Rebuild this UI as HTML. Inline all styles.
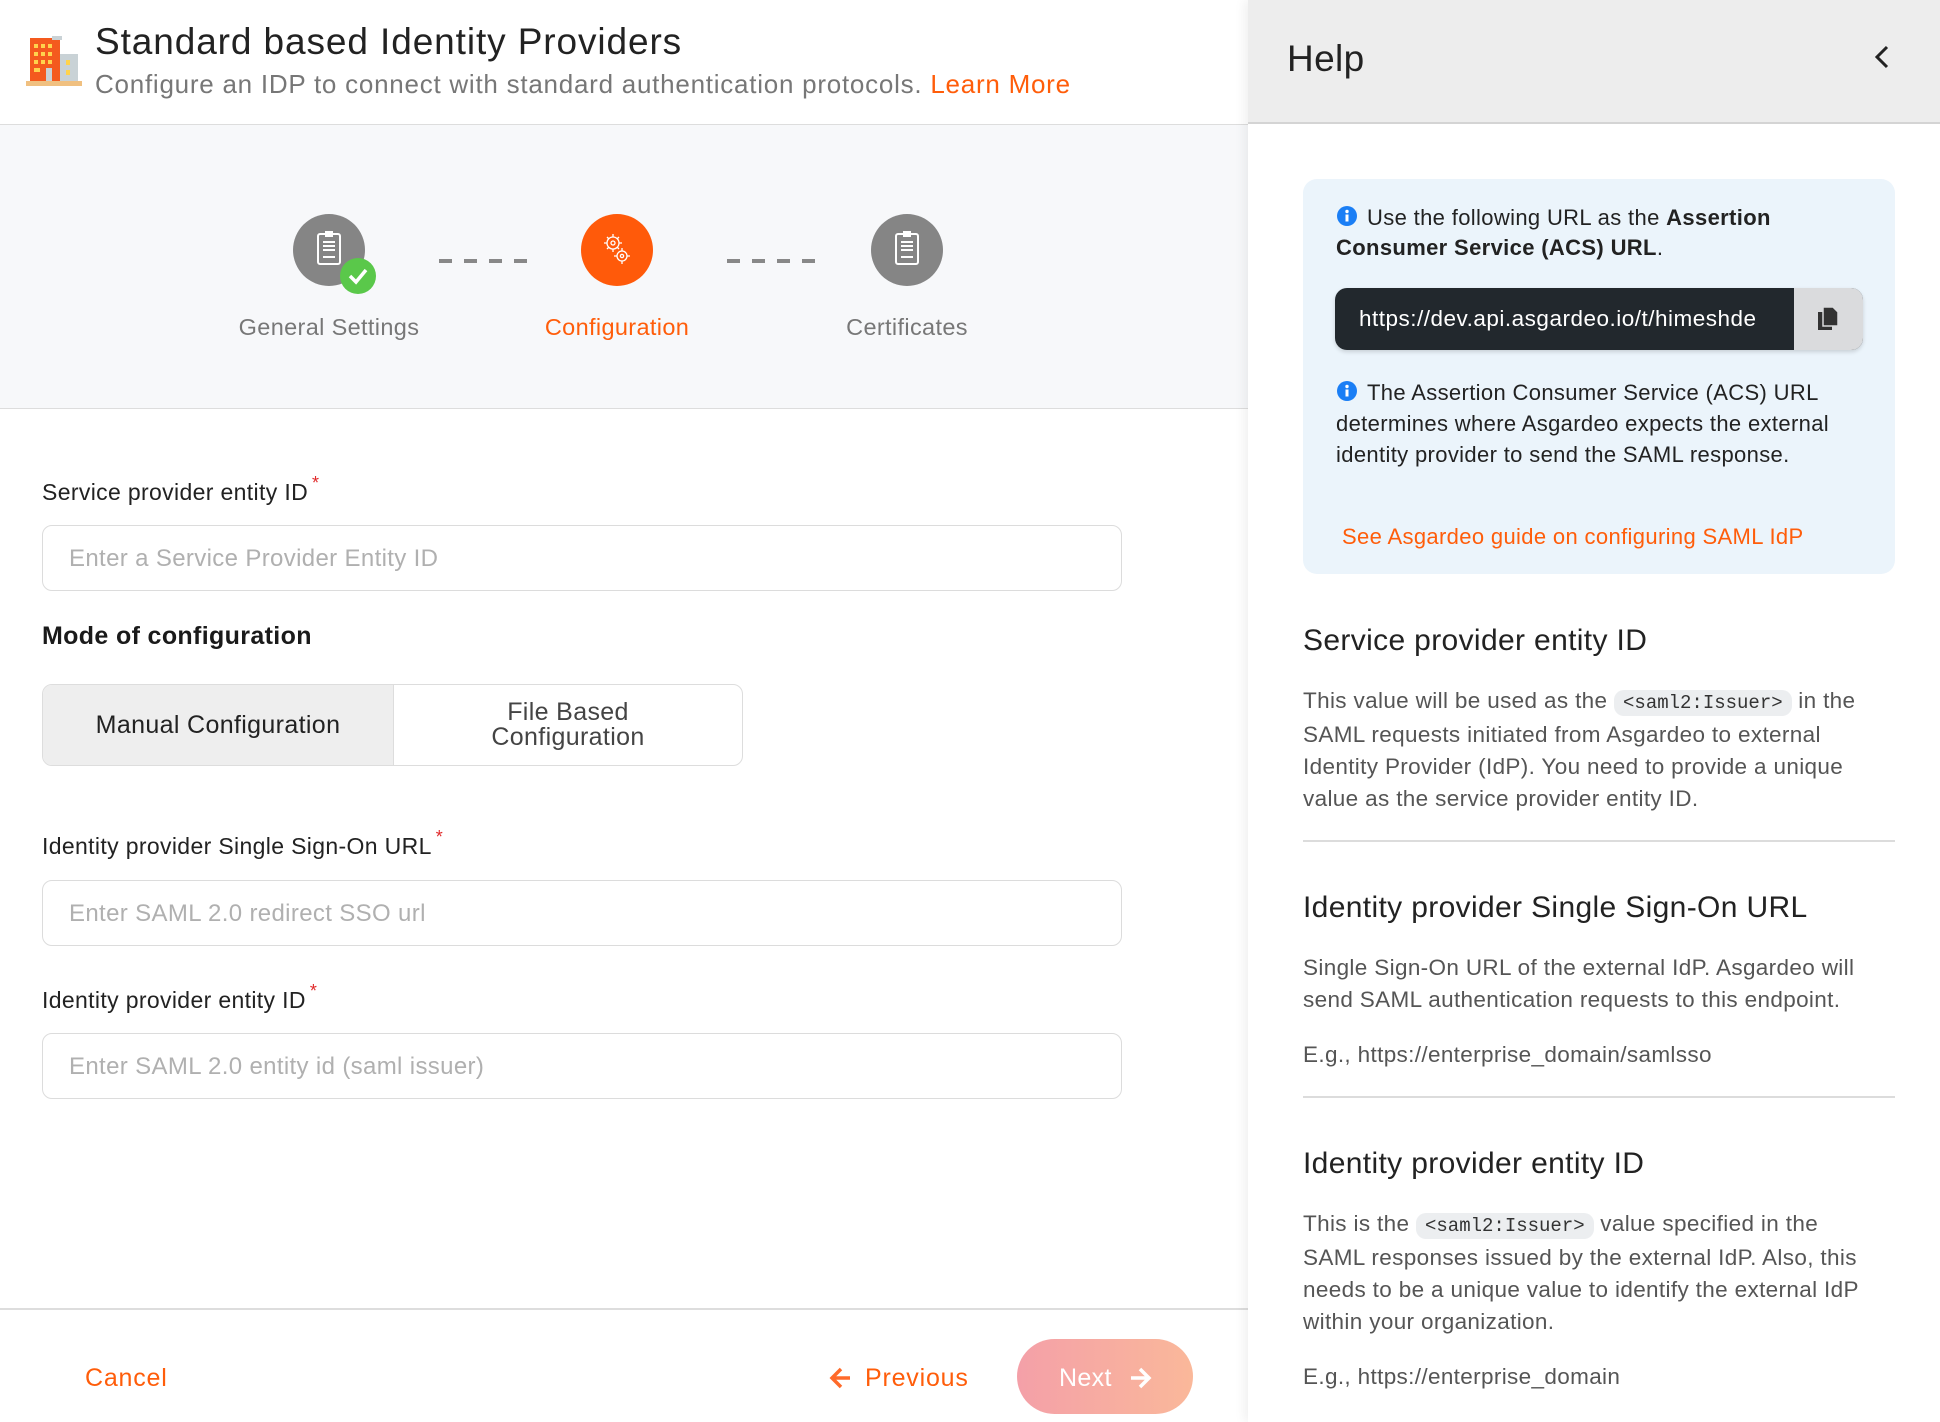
<!DOCTYPE html>
<html><head><meta charset="utf-8"><style>
*{box-sizing:border-box;margin:0;padding:0}
body{width:1940px;height:1422px;overflow:hidden;background:#fff;font-family:"Liberation Sans",sans-serif;position:relative;color:#222;letter-spacing:0.35px}
.a{position:absolute;white-space:nowrap}
.inp{position:absolute;left:42px;width:1080px;height:66px;border:1.5px solid #dcdcdc;border-radius:10px;font-size:24px;color:#b0b0b0;padding-left:26px;line-height:66px}
.lbl{font-size:23px;color:#222}
.req{color:#e0292a;font-size:18px;vertical-align:top;position:relative;top:-6px;margin-left:4px}
.circ{position:absolute;width:72px;height:72px;border-radius:50%;top:214px}
.dash{position:absolute;top:259px;height:4px;width:88px;background:repeating-linear-gradient(90deg,#888 0 13px,transparent 13px 25px)}
.ht{font-size:30px;color:#222}
.hp{font-size:22.5px;color:#555;line-height:32px}
code{font-family:"Liberation Mono",monospace;font-size:19px;background:#eceef0;border-radius:10px;padding:2px 9px;color:#333;letter-spacing:0}
.hr{position:absolute;left:1303px;width:592px;height:1.5px;background:#dcdcdc}
</style></head><body>
<svg class="a" style="left:26px;top:34px" width="56" height="54" viewBox="0 0 56 54">
<rect x="4" y="4" width="30" height="44" fill="#f45a1e"/><rect x="26" y="2" width="10" height="4" fill="#c9d2d6"/>
<rect x="34" y="20" width="18" height="28" fill="#c9d2d6"/>
<g fill="#ffd34d"><rect x="8" y="10" width="4" height="4"/><rect x="15" y="10" width="4" height="4"/><rect x="22" y="10" width="4" height="4"/><rect x="8" y="18" width="4" height="4"/><rect x="15" y="18" width="4" height="4"/><rect x="22" y="18" width="4" height="4"/><rect x="8" y="26" width="4" height="4"/><rect x="15" y="26" width="4" height="4"/><rect x="22" y="26" width="4" height="4"/><rect x="8" y="34" width="6" height="4"/><rect x="40" y="26" width="4" height="5"/><rect x="40" y="36" width="4" height="5"/></g>
<rect x="20" y="34" width="6" height="14" fill="#c9d2d6"/><rect x="0" y="47" width="56" height="5" fill="#f0c080"/></svg>
<div class="a" style="left:95px;top:21px;font-size:37px;color:#222;letter-spacing:0.9px">Standard based Identity Providers</div>
<div class="a" style="left:95px;top:69px;font-size:26px;color:#777;letter-spacing:0.75px">Configure an IDP to connect with standard authentication protocols. <span style="color:#ff5d0a">Learn More</span></div>
<div class="a" style="left:0;top:124px;width:1248px;height:285px;background:#f7f8fa;border-top:1.5px solid #ddd;border-bottom:1.5px solid #ddd"></div>
<div class="circ" style="left:293px;background:#858585"></div>
<svg class="a" style="left:315px;top:230px" width="28" height="36" viewBox="0 0 28 36"><rect x="3" y="4" width="22" height="30" rx="2" fill="none" stroke="#fff" stroke-width="2"/><rect x="10" y="1" width="8" height="6" fill="#fff"/><path d="M8 12h12M8 16h12M8 20h12M8 27h12" stroke="#fff" stroke-width="2"/></svg>
<div class="a" style="left:340px;top:258px;width:36px;height:36px;border-radius:50%;background:#5ac84a"></div>
<svg class="a" style="left:340px;top:258px" width="36" height="36"><path d="M10 18l6 6 10-12" stroke="#fff" stroke-width="3.5" fill="none"/></svg>
<div class="circ" style="left:581px;background:#ff5a0a"></div>
<svg class="a" style="left:600px;top:230px" width="34" height="40" viewBox="0 0 34 40"><g fill="none" stroke="#fff" stroke-width="1.3"><circle cx="13" cy="13" r="6"/><circle cx="13" cy="13" r="2"/><circle cx="22" cy="26" r="5"/><circle cx="22" cy="26" r="1.6"/><path d="M13 4v3M13 19v3M4 13h3M19 13h3M7 7l2 2M17 17l2 2M7 19l2-2M17 9l2-2M22 18v3M22 31v3M14 26h3M27 26h3"/></g></svg>
<div class="circ" style="left:871px;background:#858585"></div>
<svg class="a" style="left:893px;top:230px" width="28" height="36" viewBox="0 0 28 36"><rect x="3" y="4" width="22" height="30" rx="2" fill="none" stroke="#fff" stroke-width="2"/><rect x="10" y="1" width="8" height="6" fill="#fff"/><path d="M8 12h12M8 16h12M8 20h12M8 27h12" stroke="#fff" stroke-width="2"/></svg>
<div class="dash" style="left:439px"></div><div class="dash" style="left:727px"></div>
<div class="a" style="left:229px;top:314px;width:200px;text-align:center;font-size:23.5px;color:#777">General Settings</div>
<div class="a" style="left:517px;top:314px;width:200px;text-align:center;font-size:23.5px;color:#ff5d0a">Configuration</div>
<div class="a" style="left:807px;top:314px;width:200px;text-align:center;font-size:23.5px;color:#777">Certificates</div>
<div class="a lbl" style="left:42px;top:479px">Service provider entity ID<span class="req">*</span></div>
<div class="inp" style="top:525px">Enter a Service Provider Entity ID</div>
<div class="a" style="left:42px;top:622px;font-size:25px;font-weight:bold;color:#1a1a1a">Mode of configuration</div>
<div class="a" style="left:42px;top:684px;width:701px;height:82px;border:1.5px solid #ddd;border-radius:10px;overflow:hidden;display:flex">
<div style="width:351px;background:#eee;border-right:1.5px solid #ddd;font-size:25px;color:#222;text-align:center;line-height:81px">Manual Configuration</div>
<div style="flex:1;font-size:25px;color:#444;text-align:center;line-height:25px;padding-top:15px">File Based<br>Configuration</div></div>
<div class="a lbl" style="left:42px;top:833px">Identity provider Single Sign-On URL<span class="req">*</span></div>
<div class="inp" style="top:880px">Enter SAML 2.0 redirect SSO url</div>
<div class="a lbl" style="left:42px;top:987px">Identity provider entity ID<span class="req">*</span></div>
<div class="inp" style="top:1033px">Enter SAML 2.0 entity id (saml issuer)</div>
<div class="a" style="left:0;top:1308px;width:1248px;height:2px;background:#ddd"></div>
<div class="a" style="left:85px;top:1364px;font-size:25px;color:#ff5d0a;letter-spacing:0.8px">Cancel</div>
<svg class="a" style="left:828px;top:1365px" width="26" height="26"><path d="M22 13H5M13 4l-9 9 9 9" stroke="#ff6a2a" stroke-width="3.5" fill="none"/></svg>
<div class="a" style="left:865px;top:1364px;font-size:25px;color:#ff5d0a;letter-spacing:0.8px">Previous</div>
<div class="a" style="left:1017px;top:1339px;width:176px;height:75px;border-radius:38px;background:linear-gradient(90deg,#f4a0a8,#fab89a)"></div>
<div class="a" style="left:1059px;top:1364px;font-size:25px;color:#fff">Next</div>
<svg class="a" style="left:1127px;top:1365px" width="26" height="26"><path d="M4 13h17M13 4l9 9-9 9" stroke="#fff" stroke-width="3.5" fill="none"/></svg>
<div class="a" style="left:1248px;top:0;width:692px;height:1422px;background:#fff;box-shadow:-4px 0 10px rgba(0,0,0,.06)"></div>
<div class="a" style="left:1248px;top:0;width:692px;height:124px;background:#ededed;border-bottom:2px solid #d4d4d4"></div>
<div class="a" style="left:1287px;top:38px;font-size:37px;color:#222">Help</div>
<svg class="a" style="left:1872px;top:44px" width="20" height="26"><path d="M15 3L5 13l10 10" stroke="#222" stroke-width="3" fill="none"/></svg>
<div class="a" style="left:1303px;top:179px;width:592px;height:395px;background:#ebf4fb;border-radius:14px"></div>
<svg class="a" style="left:1337px;top:206px" width="20" height="20"><circle cx="10" cy="10" r="10" fill="#1a7ef5"/><rect x="8.5" y="8.5" width="3" height="7" fill="#fff"/><circle cx="10" cy="5.5" r="1.7" fill="#fff"/></svg>
<div class="a" style="left:1336px;top:203px;font-size:22px;line-height:30px;color:#222"><span style="margin-left:31px"></span>Use the following URL as the <b>Assertion</b><br><b>Consumer Service (ACS) URL</b>.</div>
<div class="a" style="left:1335px;top:288px;width:528px;height:62px;border-radius:12px;background:#22282d;overflow:hidden;box-shadow:0 2px 4px rgba(0,0,0,.15)">
<div style="position:absolute;left:24px;top:18px;font-size:22.5px;color:#fff;letter-spacing:0.5px">https://dev.api.asgardeo.io/t/himeshde</div>
<div style="position:absolute;left:459px;top:0;width:69px;height:62px;background:#dadbdd"></div>
<svg style="position:absolute;left:481px;top:18px" width="26" height="28"><rect x="2" y="6" width="14" height="18" fill="#333"/><path d="M7 1h10l5 5v14H7z" fill="#333" stroke="#dadbdd" stroke-width="1.5"/></svg></div>
<svg class="a" style="left:1337px;top:381px" width="20" height="20"><circle cx="10" cy="10" r="10" fill="#1a7ef5"/><rect x="8.5" y="8.5" width="3" height="7" fill="#fff"/><circle cx="10" cy="5.5" r="1.7" fill="#fff"/></svg>
<div class="a" style="left:1336px;top:377px;font-size:22px;line-height:31px;color:#222"><span style="margin-left:31px"></span>The Assertion Consumer Service (ACS) URL<br>determines where Asgardeo expects the external<br>identity provider to send the SAML response.</div>
<div class="a" style="left:1342px;top:524px;font-size:22px;color:#ff5d0a">See Asgardeo guide on configuring SAML IdP</div>
<div class="a ht" style="left:1303px;top:624px">Service provider entity ID</div>
<div class="a hp" style="left:1303px;top:685px">This value will be used as the <code>&lt;saml2:Issuer&gt;</code> in the<br>SAML requests initiated from Asgardeo to external<br>Identity Provider (IdP). You need to provide a unique<br>value as the service provider entity ID.</div>
<div class="hr" style="top:840px"></div>
<div class="a ht" style="left:1303px;top:891px">Identity provider Single Sign-On URL</div>
<div class="a hp" style="left:1303px;top:952px">Single Sign-On URL of the external IdP. Asgardeo will<br>send SAML authentication requests to this endpoint.</div>
<div class="a hp" style="left:1303px;top:1039px">E.g., https://enterprise_domain/samlsso</div>
<div class="hr" style="top:1096px"></div>
<div class="a ht" style="left:1303px;top:1147px">Identity provider entity ID</div>
<div class="a hp" style="left:1303px;top:1208px">This is the <code>&lt;saml2:Issuer&gt;</code> value specified in the<br>SAML responses issued by the external IdP. Also, this<br>needs to be a unique value to identify the external IdP<br>within your organization.</div>
<div class="a hp" style="left:1303px;top:1361px">E.g., https://enterprise_domain</div>
</body></html>
